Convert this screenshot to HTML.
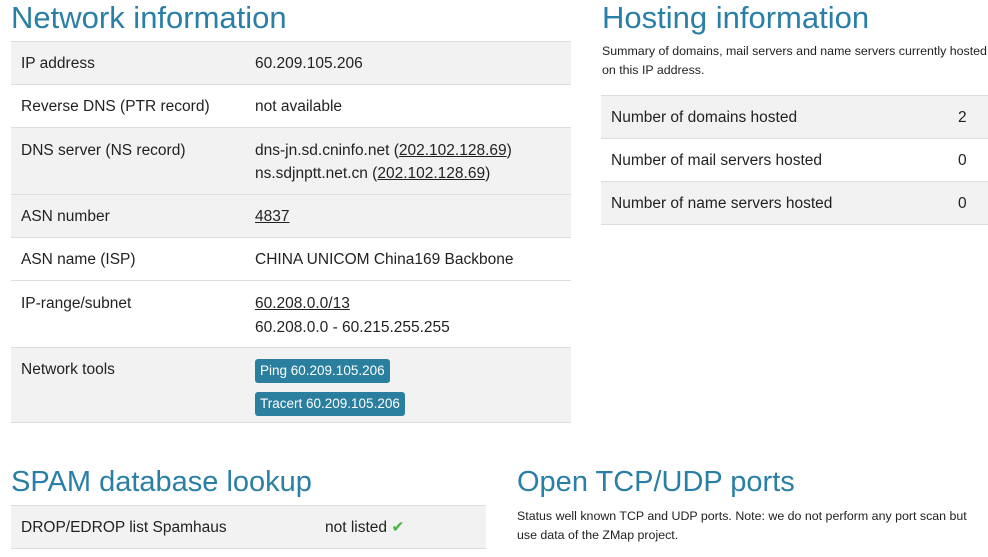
<!DOCTYPE html>
<html><head><meta charset="utf-8"><style>
body{margin:0;width:988px;height:557px;overflow:hidden;background:#fff;font-family:"Liberation Sans",sans-serif;color:#222;position:relative}
h2{position:absolute;margin:0;font-weight:normal;color:#2a7fa6;font-size:31px;line-height:36px;white-space:nowrap}
table{position:absolute;border-collapse:collapse;font-size:15.5px}
td{border-top:1px solid #ddd;border-bottom:1px solid #ddd;padding:0 10px;vertical-align:top}
tr.g td{background:#f2f2f2}
a{color:#222;text-decoration:underline}
.b{display:inline-block;background:#2a7f9e;color:#fff;border-radius:3px;padding:3px 5px;font-size:13.5px;line-height:18px}
p{position:absolute;margin:0;font-size:12.4px;line-height:19px;white-space:nowrap}
.l{height:40px;line-height:40px;padding-top:2px}
</style></head><body>
<h2 style="left:11px;top:0">Network information</h2>
<table style="left:11px;top:41px;width:560px">
<tr class="g"><td class="l" style="width:214px">IP address</td><td class="l">60.209.105.206</td></tr>
<tr><td class="l">Reverse DNS (PTR record)</td><td class="l">not available</td></tr>
<tr class="g"><td style="height:66px;padding-top:12px;line-height:22px;box-sizing:border-box">DNS server (NS record)</td><td style="padding-top:11px;line-height:23px;height:55px">dns-jn.sd.cninfo.net (<a>202.102.128.69</a>)<br>ns.sdjnptt.net.cn (<a>202.102.128.69</a>)</td></tr>
<tr class="g"><td class="l">ASN number</td><td class="l"><a>4837</a></td></tr>
<tr><td class="l">ASN name (ISP)</td><td class="l">CHINA UNICOM China169 Backbone</td></tr>
<tr><td style="height:66px;padding-top:12px;line-height:22px;box-sizing:border-box">IP-range/subnet</td><td style="padding-top:11px;line-height:24px;height:55px"><a>60.208.0.0/13</a><br>60.208.0.0 - 60.215.255.255</td></tr>
<tr class="g"><td style="height:74px;padding-top:13px;box-sizing:border-box">Network tools</td><td style="padding-top:11px;height:63px"><span class="b">Ping 60.209.105.206</span><br><span class="b" style="margin-top:9px">Tracert 60.209.105.206</span></td></tr>
</table>
<h2 style="left:602px;top:0">Hosting information</h2>
<p style="left:602px;top:42px">Summary of domains, mail servers and name servers currently hosted<br>on this IP address.</p>
<table style="left:601px;top:95px;width:387px">
<tr class="g"><td class="l">Number of domains hosted</td><td class="l" style="width:12px;padding-right:18px">2</td></tr>
<tr><td class="l">Number of mail servers hosted</td><td class="l" style="padding-right:18px">0</td></tr>
<tr class="g"><td class="l">Number of name servers hosted</td><td class="l" style="padding-right:18px">0</td></tr>
</table>
<h2 style="left:11px;top:464px;font-size:29px">SPAM database lookup</h2>
<table style="left:11px;top:505px;width:475px">
<tr class="g"><td class="l" style="width:284px">DROP/EDROP list Spamhaus</td><td class="l">not listed <span style="color:#4bb543">✔</span></td></tr>
</table>
<h2 style="left:517px;top:464px;font-size:29px">Open TCP/UDP ports</h2>
<p style="left:517px;top:507px">Status well known TCP and UDP ports. Note: we do not perform any port scan but<br>use data of the ZMap project.</p>
</body></html>
